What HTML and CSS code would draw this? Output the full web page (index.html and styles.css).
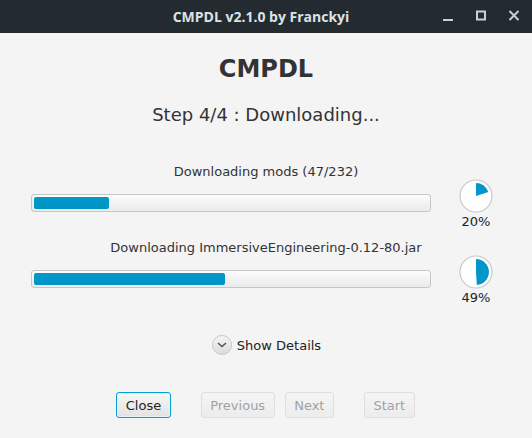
FILE: index.html
```html
<!DOCTYPE html>
<html>
<head>
<meta charset="utf-8">
<link rel="stylesheet" href="styles.css">
</head>
<body>
<div class="window">
  <header class="titlebar">
    <div class="title">CMPDL v2.1.0 by Franckyi</div>
    <div class="controls">
      <svg class="ctl" width="12" height="12" viewBox="0 0 12 12"><rect x="1" y="9" width="10" height="2" fill="#c9d1d5"/></svg>
      <svg class="ctl" width="12" height="12" viewBox="0 0 12 12"><rect x="2" y="1.5" width="8" height="8" fill="none" stroke="#c9d1d5" stroke-width="2"/></svg>
      <svg class="ctl" width="12" height="12" viewBox="0 0 12 12"><path d="M1.5 1 L10.5 10 M10.5 1 L1.5 10" stroke="#c9d1d5" stroke-width="2"/></svg>
    </div>
  </header>
  <main class="content">
    <h1 class="app-name">CMPDL</h1>
    <div class="step">Step 4/4 : Downloading...</div>

    <section class="task">
      <div class="task-label">Downloading mods (47/232)</div>
      <div class="task-row">
        <div class="bar"><div class="fill" style="width:19%"></div></div>
        <div class="pie-box">
          <svg class="pie" width="34" height="34" viewBox="0 0 34 34">
            <circle cx="17" cy="17" r="16" fill="#fff" stroke="#c9c9c9" stroke-width="1.2"/>
            <path d="M17 17 L17 4 A13 13 0 0 1 29.36 12.98 Z" fill="#0096c9"/>
          </svg>
          <div class="pct">20%</div>
        </div>
      </div>
    </section>

    <section class="task">
      <div class="task-label">Downloading ImmersiveEngineering-0.12-80.jar</div>
      <div class="task-row">
        <div class="bar"><div class="fill" style="width:48.5%"></div></div>
        <div class="pie-box">
          <svg class="pie" width="34" height="34" viewBox="0 0 34 34">
            <circle cx="17" cy="17" r="16" fill="#fff" stroke="#c9c9c9" stroke-width="1.2"/>
            <path d="M17 17 L17 4 A13 13 0 0 1 17.82 29.97 Z" fill="#0096c9"/>
          </svg>
          <div class="pct">49%</div>
        </div>
      </div>
    </section>

    <div class="details">
      <span class="details-btn">
        <svg width="10" height="6" viewBox="0 0 10 6"><path d="M1 1 L5 4.5 L9 1" fill="none" stroke="#555" stroke-width="1.6"/></svg>
      </span>
      <span class="details-text">Show Details</span>
    </div>

    <div class="buttons">
      <button class="btn focused">Close</button>
      <button class="btn disabled gap-l">Previous</button>
      <button class="btn disabled">Next</button>
      <button class="btn disabled gap-l">Start</button>
    </div>
  </main>
</div>
</body>
</html>
```
FILE: styles.css
```css
html, body {
  margin: 0;
  padding: 0;
}
body {
  width: 532px;
  height: 438px;
  overflow: hidden;
  background: #f4f4f4;
  font-family: "DejaVu Sans", sans-serif;
}
.window {
  display: flex;
  flex-direction: column;
  height: 438px;
}
.titlebar {
  height: 33px;
  background: #232b30;
  display: flex;
  align-items: center;
  justify-content: center;
  position: relative;
}
.title {
  font-family: "Open Sans", sans-serif;
  font-weight: 700;
  font-size: 14px;
  color: #dde2e5;
  margin-left: -10px;
}
.controls {
  position: absolute;
  right: 12px;
  top: 10px;
  display: flex;
  gap: 21px;
}
.ctl { display: block; }
.content {
  flex: 1;
  display: flex;
  flex-direction: column;
  align-items: center;
}
.app-name {
  margin: 22px 0 0;
  font-size: 24px;
  line-height: 28px;
  font-weight: 700;
  color: #333;
}
.step {
  margin-top: 21px;
  font-size: 18px;
  line-height: 22px;
  color: #333;
}
.task {
  width: 100%;
  display: flex;
  flex-direction: column;
  align-items: center;
}
.task:first-of-type { margin-top: 38px; }
.task + .task { margin-top: 10px; }
.task-label {
  font-size: 13px;
  line-height: 16px;
  color: #333;
}
.task-row {
  width: 100%;
  box-sizing: border-box;
  padding-left: 31px;
  display: flex;
  align-items: flex-start;
}
.bar {
  margin-top: 14px;
  width: 400px;
  height: 18px;
  box-sizing: border-box;
  border: 1px solid #c6c6c6;
  border-radius: 3px;
  background: linear-gradient(#fdfdfd, #f4f4f4 40%, #eaeaea);
  padding: 2px;
}
.fill {
  height: 100%;
  border-radius: 2px;
  background: linear-gradient(#0099cc, #0093c5);
}
.pie-box {
  margin-left: 27px;
  width: 36px;
  display: flex;
  flex-direction: column;
  align-items: center;
}
.pie {
  display: block;
  margin-top: -1px;
}
.pct {
  margin-top: 1px;
  font-size: 13px;
  line-height: 16px;
  color: #222;
}
.details {
  margin-top: 29px;
  display: flex;
  align-items: center;
  gap: 5px;
  margin-left: 1px;
}
.details-btn {
  width: 18px;
  height: 18px;
  border-radius: 50%;
  border: 1px solid #c8c8c8;
  background: linear-gradient(#f4f4f4, #dcdcdc);
  display: flex;
  align-items: center;
  justify-content: center;
}
.details-text {
  font-size: 13px;
  color: #222;
}
.buttons {
  margin-top: 37px;
  display: flex;
  gap: 10px;
  margin-left: -1px;
}
.btn {
  font-family: "DejaVu Sans", sans-serif;
  font-size: 13px;
  height: 26px;
  padding: 0 8.5px;
  border: 1px solid #c2c2c2;
  border-radius: 3px;
  background: linear-gradient(#f7f7f7, #e2e2e2);
  color: #222;
}
.btn.focused {
  border: 1px solid #039ed3;
  box-shadow: inset 0 0 0 1px #e6f4fa;
}
.btn.disabled {
  opacity: 0.4;
}
.gap-l { margin-left: 20px; }
```
